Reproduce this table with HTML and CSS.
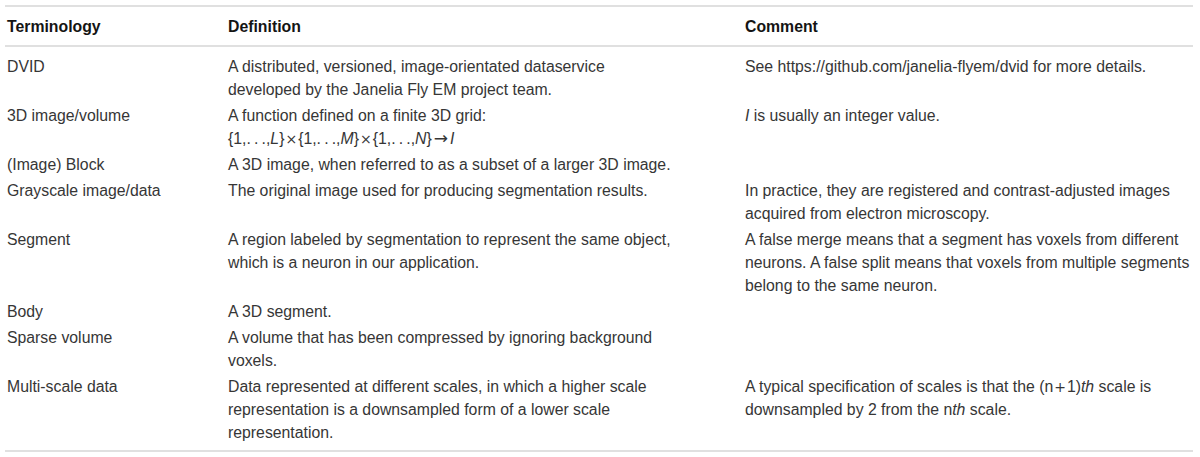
FILE: index.html
```html
<!DOCTYPE html>
<html lang="en">
<head>
<meta charset="utf-8">
<title>Terminology</title>
<link rel="stylesheet" href="styles.css">
</head>
<body>
<table class="terms">
  <colgroup>
    <col class="c-term">
    <col class="c-def">
    <col class="c-com">
  </colgroup>
  <thead>
    <tr>
      <th>Terminology</th>
      <th class="def">Definition</th>
      <th>Comment</th>
    </tr>
  </thead>
  <tbody>
    <tr>
      <td>DVID</td>
      <td class="def">A distributed, versioned, image-orientated dataservice developed by the Janelia Fly EM project team.</td>
      <td>See https://github.com/janelia-flyem/dvid for more details.</td>
    </tr>
    <tr>
      <td>3D image/volume</td>
      <td class="def">A function defined on a finite 3D grid:<br>{1,.&thinsp;.&thinsp;.,<i>L</i>}<span class="op">&times;</span>{1,.&thinsp;.&thinsp;.,<i>M</i>}<span class="op">&times;</span>{1,.&thinsp;.&thinsp;.,<i>N</i>}<span class="op arrow">&rarr;</span><i>I</i></td>
      <td><i>I</i> is usually an integer value.</td>
    </tr>
    <tr>
      <td>(Image) Block</td>
      <td class="def">A 3D image, when referred to as a subset of a larger 3D image.</td>
      <td></td>
    </tr>
    <tr>
      <td>Grayscale image/data</td>
      <td class="def">The original image used for producing segmentation results.</td>
      <td>In practice, they are registered and contrast-adjusted images acquired from electron microscopy.</td>
    </tr>
    <tr>
      <td>Segment</td>
      <td class="def">A region labeled by segmentation to represent the same object, which is a neuron in our application.</td>
      <td>A false merge means that a segment has voxels from different neurons. A false split means that voxels from multiple segments belong to the same neuron.</td>
    </tr>
    <tr>
      <td>Body</td>
      <td class="def">A 3D segment.</td>
      <td></td>
    </tr>
    <tr>
      <td>Sparse volume</td>
      <td class="def">A volume that has been compressed by ignoring background voxels.</td>
      <td></td>
    </tr>
    <tr>
      <td>Multi-scale data</td>
      <td class="def">Data represented at different scales, in which a higher scale representation is a downsampled form of a lower scale representation.</td>
      <td>A typical specification of scales is that the (n<span class="op">+</span>1)<i>th</i> scale is downsampled by 2 from the n<i>th</i> scale.</td>
    </tr>
  </tbody>
</table>
</body>
</html>
```

FILE: styles.css
```css
html, body {
  margin: 0;
  padding: 0;
  background: #ffffff;
}

body {
  font-family: "Liberation Sans", Arial, Helvetica, sans-serif;
  font-size: 15.8px;
  line-height: 23px;
  color: #363636;
}

.terms {
  margin: 5px 0 0 5px;
  width: 1188px;
  table-layout: fixed;
  border-collapse: separate;
  border-spacing: 0;
  border-top: 2px solid #e0e0e0;
  border-bottom: 2px solid #e0e0e0;
}

.c-term { width: 221px; }
.c-def { width: 517px; }
.c-com { width: 450px; }

.terms th,
.terms td {
  text-align: left;
  vertical-align: top;
  padding: 1px 0 2px 2px;
}

.terms th {
  font-weight: bold;
  color: #141414;
  padding-top: 8px;
  padding-bottom: 7px;
  border-bottom: 2px solid #e0e0e0;
}

.terms .def {
  padding-right: 66px;
}

.terms tbody tr:first-child td {
  padding-top: 8px;
}

.terms tbody tr:last-child td {
  padding-bottom: 6px;
}

.terms i {
  font-style: italic;
}

.terms .op {
  font-family: "DejaVu Sans", sans-serif;
  font-size: 14px;
  line-height: 1;
  padding: 0 1px;
}

.terms .arrow {
  font-size: 17px;
  padding: 0 2px;
}
```
